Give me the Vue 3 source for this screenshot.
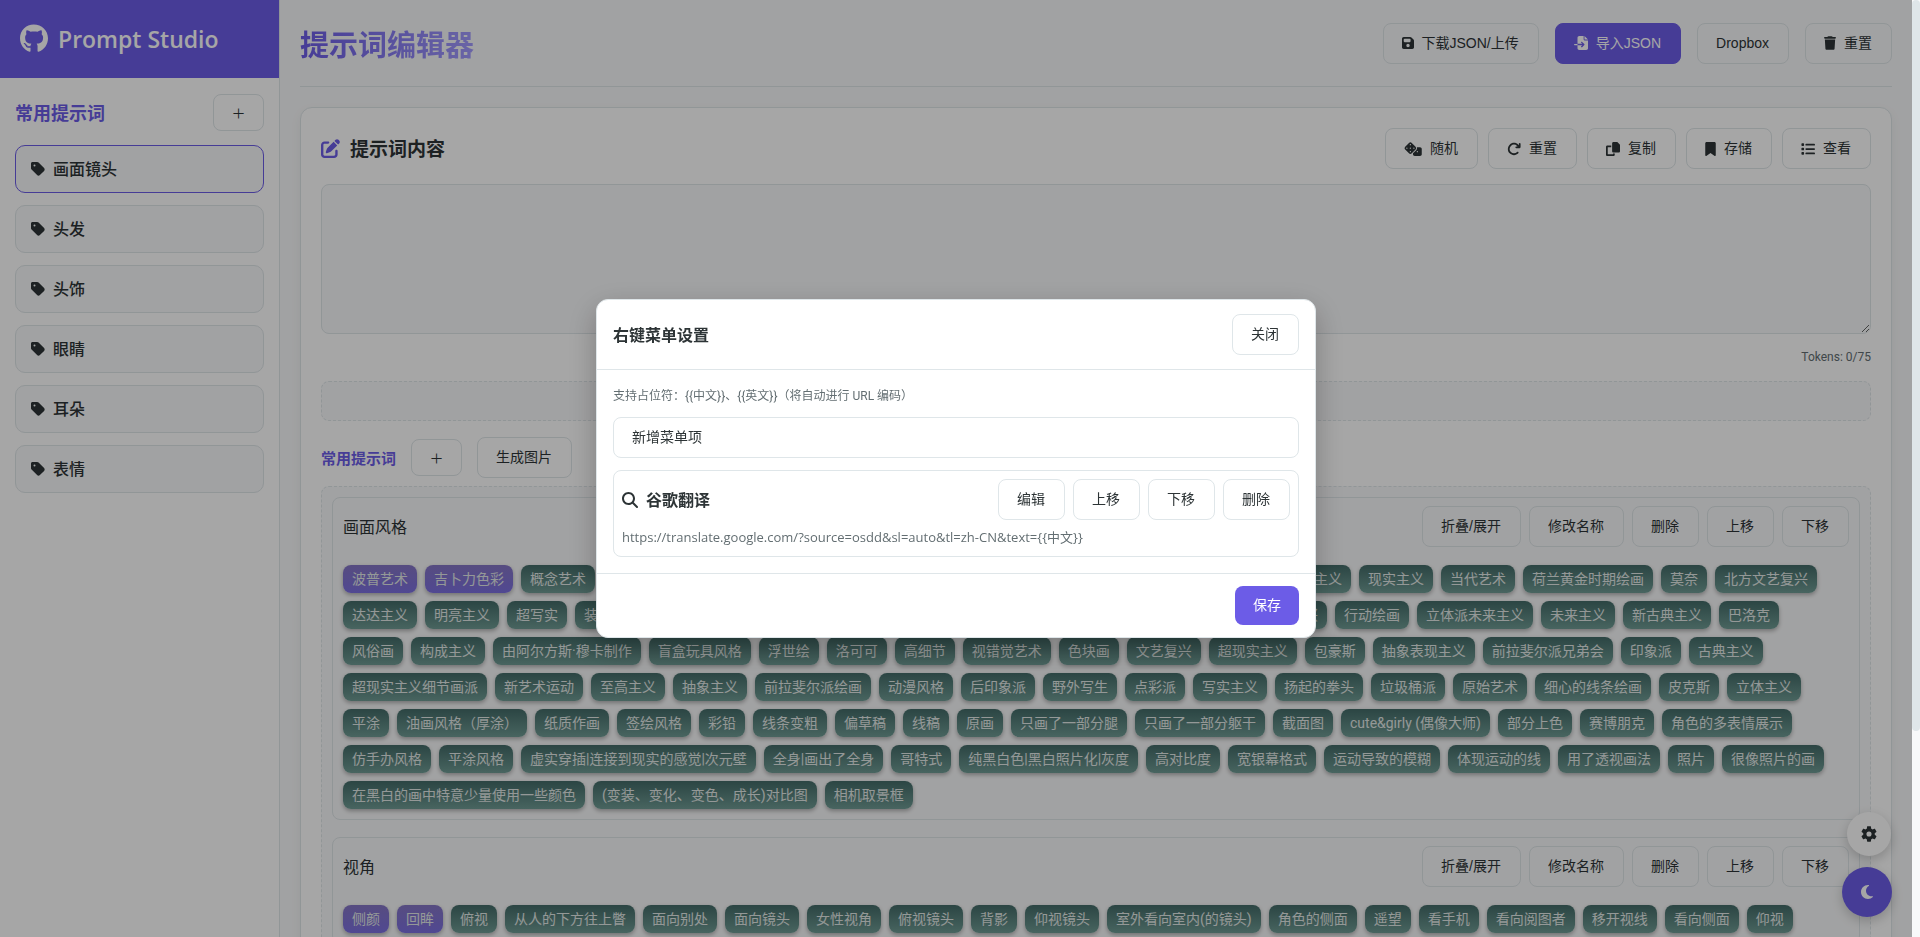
<script setup>
import { ref, h } from 'vue'

const icons = {
  github: ['0 0 496 512', 'M165.9 397.4c0 2-2.3 3.6-5.2 3.6-3.3.3-5.6-1.3-5.6-3.6 0-2 2.3-3.6 5.2-3.6 3-.3 5.6 1.3 5.6 3.6zm-31.1-4.5c-.7 2 1.3 4.3 4.3 4.9 2.6 1 5.6 0 6.2-2s-1.3-4.3-4.3-5.2c-2.6-.7-5.5.3-6.2 2.3zm44.2-1.7c-2.9.7-4.9 2.6-4.6 4.9.3 2 2.9 3.3 5.9 2.6 2.9-.7 4.9-2.6 4.6-4.6-.3-1.9-3-3.2-5.9-2.9zM244.8 8C106.1 8 0 113.3 0 252c0 110.9 69.8 205.8 169.5 239.2 12.8 2.3 17.3-5.6 17.3-12.1 0-6.2-.3-40.4-.3-61.4 0 0-70 15-84.7-29.8 0 0-11.4-29.1-27.8-36.6 0 0-22.9-15.7 1.6-15.4 0 0 24.9 2 38.6 25.8 21.9 38.6 58.6 27.5 72.9 20.9 2.3-16 8.8-27.1 16-33.7-55.9-6.2-112.3-14.3-112.3-110.5 0-27.5 7.6-41.3 23.6-58.9-2.6-6.5-11.1-33.3 2.6-67.9 20.9-6.5 69 27 69 27 20-5.6 41.5-8.5 62.8-8.5s42.8 2.9 62.8 8.5c0 0 48.1-33.6 69-27 13.7 34.7 5.2 61.4 2.6 67.9 16 17.7 25.8 31.5 25.8 58.9 0 96.5-58.9 104.2-114.8 110.5 9.2 7.9 17 22.9 17 46.4 0 33.7-.3 75.4-.3 83.6 0 6.5 4.6 14.4 17.3 12.1C428.2 457.8 496 362.9 496 252 496 113.3 383.5 8 244.8 8z'],
  tag: ['0 0 448 512', 'M0 80V229.5c0 17 6.7 33.3 18.7 45.3l176 176c25 25 65.5 25 90.5 0L418.7 317.3c25-25 25-65.5 0-90.5l-176-176c-12-12-28.3-18.7-45.3-18.7H48C21.5 32 0 53.5 0 80zm112 32a32 32 0 1 1 0 64 32 32 0 1 1 0-64z'],
  save: ['0 0 448 512', 'M64 32C28.7 32 0 60.7 0 96V416c0 35.3 28.7 64 64 64H384c35.3 0 64-28.7 64-64V173.3c0-17-6.7-33.3-18.7-45.3L352 50.7C340 38.7 323.7 32 306.7 32H64zm0 96c0-17.7 14.3-32 32-32H288c17.7 0 32 14.3 32 32v64c0 17.7-14.3 32-32 32H96c-17.7 0-32-14.3-32-32V128zM224 288a64 64 0 1 1 0 128 64 64 0 1 1 0-128z'],
  import: ['0 0 512 512', 'M128 64c0-35.3 28.7-64 64-64H352V128c0 17.7 14.3 32 32 32H512V448c0 35.3-28.7 64-64 64H192c-35.3 0-64-28.7-64-64V336H302.1l-39 39c-9.4 9.4-9.4 24.6 0 33.9s24.6 9.4 33.9 0l80-80c9.4-9.4 9.4-24.6 0-33.9l-80-80c-9.4-9.4-24.6-9.4-33.9 0s-9.4 24.6 0 33.9l39 39H128V64zm0 224v48H24c-13.3 0-24-10.7-24-24s10.7-24 24-24H128zM512 128H384V0L512 128z'],
  trash: ['0 0 448 512', 'M135.2 17.7L128 32H32C14.3 32 0 46.3 0 64S14.3 96 32 96H416c17.7 0 32-14.3 32-32s-14.3-32-32-32H320l-7.2-14.3C307.4 6.8 296.3 0 284.2 0H163.8c-12.1 0-23.2 6.8-28.6 17.7zM416 128H32L53.2 467c1.6 25.3 22.6 45 47.9 45H346.9c25.3 0 46.3-19.7 47.9-45L416 128z'],
  rotate: ['0 0 512 512', 'M386.3 160H336c-17.7 0-32 14.3-32 32s14.3 32 32 32H464c17.7 0 32-14.3 32-32V64c0-17.7-14.3-32-32-32s-32 14.3-32 32v51.2L414.4 97.6c-87.5-87.5-229.3-87.5-316.8 0s-87.5 229.3 0 316.8s229.3 87.5 316.8 0c12.5-12.5 12.5-32.8 0-45.3s-32.8-12.5-45.3 0c-62.5 62.5-163.8 62.5-226.3 0s-62.5-163.8 0-226.3s163.8-62.5 226.3 0L386.3 160z'],
  copy: ['0 0 512 512', 'M272 0H396.1c12.7 0 24.9 5.1 33.9 14.1l67.9 67.9c9 9 14.1 21.2 14.1 33.9V336c0 26.5-21.5 48-48 48H272c-26.5 0-48-21.5-48-48V48c0-26.5 21.5-48 48-48zM48 128H192v64H64V448H256V416h64v48c0 26.5-21.5 48-48 48H48c-26.5 0-48-21.5-48-48V176c0-26.5 21.5-48 48-48z'],
  bookmark: ['0 0 384 512', 'M0 48V487.7C0 501.1 10.9 512 24.3 512c5 0 9.9-1.5 14-4.4L192 400 345.7 507.6c4.1 2.9 9 4.4 14 4.4c13.4 0 24.3-10.9 24.3-24.3V48c0-26.5-21.5-48-48-48H48C21.5 0 0 21.5 0 48z'],
  list: ['0 0 512 512', 'M40 48H88a24 24 0 0 1 24 24V120a24 24 0 0 1-24 24H40a24 24 0 0 1-24-24V72A24 24 0 0 1 40 48zM192 64H480a32 32 0 0 1 0 64H192a32 32 0 0 1 0-64zM192 224H480a32 32 0 0 1 0 64H192a32 32 0 0 1 0-64zM192 384H480a32 32 0 0 1 0 64H192a32 32 0 0 1 0-64zM40 208H88a24 24 0 0 1 24 24V280a24 24 0 0 1-24 24H40a24 24 0 0 1-24-24V232A24 24 0 0 1 40 208zM40 368H88a24 24 0 0 1 24 24V440a24 24 0 0 1-24 24H40a24 24 0 0 1-24-24V392A24 24 0 0 1 40 368z'],
  dice: ['0 0 640 512', 'M274.9 34.3c-28.1-28.1-73.7-28.1-101.8 0L34.3 173.1c-28.1 28.1-28.1 73.7 0 101.8L173.1 413.7c28.1 28.1 73.7 28.1 101.8 0L413.7 274.9c28.1-28.1 28.1-73.7 0-101.8L274.9 34.3zM200 224a24 24 0 1 1 48 0 24 24 0 1 1-48 0zM96 200a24 24 0 1 1 0 48 24 24 0 1 1 0-48zM224 376a24 24 0 1 1 0-48 24 24 0 1 1 0 48zM352 200a24 24 0 1 1 0 48 24 24 0 1 1 0-48zM224 120a24 24 0 1 1 0-48 24 24 0 1 1 0 48zm96 328c0 35.3 28.7 64 64 64H576c35.3 0 64-28.7 64-64V256c0-35.3-28.7-64-64-64H461.7c11.6 36 3.1 77-25.4 105.5L320 413.8V448zM480 328a24 24 0 1 1 0 48 24 24 0 1 1 0-48z'],
  edit: ['0 0 512 512', 'M471.6 21.7c-21.9-21.9-57.3-21.9-79.2 0L362.3 51.7l97.9 97.9 30.1-30.1c21.9-21.9 21.9-57.3 0-79.2L471.6 21.7zm-299.2 220c-6.1 6.1-10.8 13.6-13.5 21.9l-29.6 88.8c-2.9 8.6-.6 18.1 5.8 24.6s15.9 8.7 24.6 5.8l88.8-29.6c8.2-2.7 15.7-7.4 21.9-13.5L437.7 172.3 339.7 74.3 172.4 241.7zM96 64C43 64 0 107 0 160V416c0 53 43 96 96 96H352c53 0 96-43 96-96V320c0-17.7-14.3-32-32-32s-32 14.3-32 32v96c0 17.7-14.3 32-32 32H96c-17.7 0-32-14.3-32-32V160c0-17.7 14.3-32 32-32h96c17.7 0 32-14.3 32-32s-14.3-32-32-32H96z'],
  search: ['0 0 512 512', 'M416 208c0 45.9-14.9 88.3-40 122.7L502.6 457.4c12.5 12.5 12.5 32.8 0 45.3s-32.8 12.5-45.3 0L330.7 376c-34.4 25.2-76.8 40-122.7 40C93.1 416 0 322.9 0 208S93.1 0 208 0S416 93.1 416 208zM208 352a144 144 0 1 0 0-288 144 144 0 1 0 0 288z'],
  gear: ['2 2 20 20', 'M19.14 12.94c.04-.3.06-.61.06-.94 0-.32-.02-.64-.07-.94l2.03-1.58c.18-.14.23-.41.12-.61l-1.92-3.32c-.12-.22-.37-.29-.59-.22l-2.39.96c-.5-.38-1.03-.7-1.62-.94l-.36-2.54c-.04-.24-.24-.41-.48-.41h-3.84c-.24 0-.43.17-.47.41l-.36 2.54c-.59.24-1.13.57-1.62.94l-2.39-.96c-.22-.08-.47 0-.59.22L2.74 8.87c-.12.21-.08.47.12.61l2.03 1.58c-.05.3-.09.63-.09.94s.02.64.07.94l-2.03 1.58c-.18.14-.23.41-.12.61l1.92 3.32c.12.22.37.29.59.22l2.39-.96c.5.38 1.03.7 1.62.94l.36 2.54c.05.24.24.41.48.41h3.84c.24 0 .44-.17.47-.41l.36-2.54c.59-.24 1.13-.56 1.62-.94l2.39.96c.22.08.47 0 .59-.22l1.92-3.32c.12-.22.07-.47-.12-.61l-2.01-1.58zM12 15.2a3.2 3.2 0 1 1 0-6.4 3.2 3.2 0 0 1 0 6.4z'],
  moon: ['0 0 384 512', 'M223.5 32C100 32 0 132.3 0 256S100 480 223.5 480c60.6 0 115.5-24.2 155.8-63.4c5-4.9 6.3-12.5 3.1-18.7s-10.1-9.7-17-8.5c-9.8 1.7-19.8 2.6-30.1 2.6c-96.9 0-175.5-78.8-175.5-176c0-65.8 36-123.1 89.3-153.3c6.1-3.5 9.2-10.5 7.7-17.3s-7.3-11.9-14.3-12.5c-6.3-.5-12.6-.8-19-.8z'],
}

const Icon = (props) =>
  h('svg', { viewBox: icons[props.name][0], fill: 'currentColor', 'aria-hidden': 'true' }, [
    h('path', { d: icons[props.name][1] }),
  ])
Icon.props = ['name']

const categories = ['画面镜头', '头发', '头饰', '眼睛', '耳朵', '表情']
const activeCategory = ref('画面镜头')
const prompt = ref('')

const editorActions = [
  { icon: 'dice', label: '随机' },
  { icon: 'rotate', label: '重置' },
  { icon: 'copy', label: '复制' },
  { icon: 'bookmark', label: '存储' },
  { icon: 'list', label: '查看' },
]
const groupActions = ['折叠/展开', '修改名称', '删除', '上移', '下移']
const itemActions = ['编辑', '上移', '下移', '删除']

const groups = [
  {
    name: '画面风格',
    picked: 2,
    tags: [
      '波普艺术', '吉卜力色彩', '概念艺术', '表现主义绘画', '波斯细密画风格', '装饰艺术运动', '哥特式建筑风格', '浮世绘版画集', '野兽派绘画', '象征主义',
      '现实主义', '当代艺术', '荷兰黄金时期绘画', '莫奈', '北方文艺复兴',
      '达达主义', '明亮主义', '超写实', '装饰艺术', '油画', '水彩', '素描', '版画', '壁画', '剪纸', '漆画', '水墨', '未来派', '巴比松派', '哥特式复兴',
      '行动绘画', '立体派未来主义', '未来主义', '新古典主义', '巴洛克',
      '风俗画', '构成主义', '由阿尔方斯·穆卡制作', '盲盒玩具风格', '浮世绘', '洛可可', '高细节', '视错觉艺术', '色块画', '文艺复兴', '超现实主义', '包豪斯', '抽象表现主义', '前拉斐尔派兄弟会', '印象派', '古典主义',
      '超现实主义细节画派', '新艺术运动', '至高主义', '抽象主义', '前拉斐尔派绘画', '动漫风格', '后印象派', '野外写生', '点彩派', '写实主义', '扬起的拳头', '垃圾桶派', '原始艺术', '细心的线条绘画', '皮克斯', '立体主义',
      '平涂', '油画风格（厚涂）', '纸质作画', '签绘风格', '彩铅', '线条变粗', '偏草稿', '线稿', '原画', '只画了一部分腿', '只画了一部分躯干', '截面图', 'cute&girly (偶像大师)', '部分上色', '赛博朋克', '角色的多表情展示',
      '仿手办风格', '平涂风格', '虚实穿插|连接到现实的感觉|次元壁', '全身|画出了全身', '哥特式', '纯黑白色|黑白照片化|灰度', '高对比度', '宽银幕格式', '运动导致的模糊', '体现运动的线', '用了透视画法', '照片', '很像照片的画',
      '在黑白的画中特意少量使用一些颜色', '(变装、变化、变色、成长)对比图', '相机取景框',
    ],
  },
  {
    name: '视角',
    picked: 2,
    tags: [
      '侧颜', '回眸', '俯视', '从人的下方往上瞥', '面向别处', '面向镜头', '女性视角', '俯视镜头', '背影', '仰视镜头', '室外看向室内(的镜头)', '角色的侧面', '遥望', '看手机', '看向阅图者', '移开视线', '看向侧面', '仰视',
    ],
  },
]

const hint = '支持占位符：{{中文}}、{{英文}}（将自动进行 URL 编码）'
const menuUrl = 'https://translate.google.com/?source=osdd&sl=auto&tl=zh-CN&text={{中文}}'
</script>

<template>
  <div class="page">
    <aside class="sidebar">
      <div class="brand">
        <a href="#" aria-label="GitHub"><Icon name="github" class="brand-icon" /></a>
        <span>Prompt Studio</span>
      </div>
      <div class="side-body">
        <div class="side-head">
          <h2>常用提示词</h2>
          <button type="button" class="btn plus">+</button>
        </div>
        <button
          v-for="c in categories"
          :key="c"
          type="button"
          class="category"
          :class="{ active: c === activeCategory }"
          @click="activeCategory = c"
        >
          <Icon name="tag" class="tag-icon" />{{ c }}
        </button>
      </div>
    </aside>

    <main class="main">
      <header class="top">
        <h1>提示词编辑器</h1>
        <div class="actions wide">
          <button type="button" class="btn"><Icon name="save" class="ic narrow" />下载JSON/上传</button>
          <button type="button" class="btn primary"><Icon name="import" class="ic" />导入JSON</button>
          <button type="button" class="btn">Dropbox</button>
          <button type="button" class="btn"><Icon name="trash" class="ic narrow" />重置</button>
        </div>
      </header>

      <section class="card">
        <div class="card-head">
          <h2><Icon name="edit" class="edit-icon" />提示词内容</h2>
          <div class="actions">
            <button v-for="a in editorActions" :key="a.label" type="button" class="btn">
              <Icon :name="a.icon" class="ic" :class="a.icon" />{{ a.label }}
            </button>
          </div>
        </div>
        <textarea v-model="prompt" aria-label="提示词内容"></textarea>
        <div class="tokens">Tokens: 0/75</div>
        <div class="drop"></div>
        <div class="common">
          <h3>常用提示词</h3>
          <button type="button" class="btn plus">+</button>
          <button type="button" class="btn">生成图片</button>
        </div>
        <div class="groups">
          <section v-for="g in groups" :key="g.name" class="group">
            <div class="group-head">
              <span>{{ g.name }}</span>
              <div class="actions tight">
                <button v-for="a in groupActions" :key="a" type="button" class="btn">{{ a }}</button>
              </div>
            </div>
            <div class="tags">
              <button v-for="(t, i) in g.tags" :key="t" type="button" class="tag" :class="{ picked: i < g.picked }">{{ t }}</button>
            </div>
          </section>
        </div>
      </section>
    </main>

    <div class="floats">
      <button type="button" class="float light" aria-label="设置"><Icon name="gear" class="gear-icon" /></button>
      <button type="button" class="float dark" aria-label="夜间模式"><Icon name="moon" class="moon-icon" /></button>
    </div>
  </div>

  <div class="rail"><div class="thumb"></div></div>

  <div class="overlay">
    <div class="modal" role="dialog" aria-labelledby="menu-title">
      <header class="modal-head">
        <h2 id="menu-title">右键菜单设置</h2>
        <button type="button" class="btn">关闭</button>
      </header>
      <div class="modal-body">
        <p class="hint">{{ hint }}</p>
        <button type="button" class="btn add">新增菜单项</button>
        <div class="item">
          <div class="item-head">
            <h3><Icon name="search" class="search-icon" />谷歌翻译</h3>
            <div class="actions tight">
              <button v-for="a in itemActions" :key="a" type="button" class="btn">{{ a }}</button>
            </div>
          </div>
          <p class="url">{{ menuUrl }}</p>
        </div>
      </div>
      <footer class="modal-foot">
        <button type="button" class="btn primary save">保存</button>
      </footer>
    </div>
  </div>
</template>

<style>
html,
body {
  overflow: hidden;
  background: #f8f9fa;
}
</style>

<style scoped>
.page,
.overlay {
  --purple: #6c5ce7;
  --line: #dfe6e9;
  --ink: #2d3436;
  --muted: #636e72;
  box-sizing: border-box;
  color: var(--ink);
  font-family: "Open Sans", "Noto Sans CJK SC", sans-serif;
  font-size: 16px;
  line-height: 26px;
}
.page *,
.overlay * {
  box-sizing: border-box;
}
.page {
  display: flex;
  height: 100vh;
  margin-right: 8px;
  overflow: hidden;
  background: #f8f9fa;
}
h1,
h2,
h3,
p {
  margin: 0;
}
svg {
  display: block;
  flex: none;
}

.sidebar {
  flex: 0 0 280px;
  background: #fff;
  border-right: 1px solid var(--line);
}
.brand {
  display: flex;
  align-items: center;
  gap: 10px;
  height: 78px;
  padding: 0 20px;
  background: var(--purple);
  color: #fff;
  font-size: 23px;
  font-weight: 600;
  line-height: 38px;
}
.brand a {
  padding-bottom: 2px;
  color: inherit;
}
.brand-icon {
  width: 28px;
  height: 29px;
}
.side-body {
  display: flex;
  flex-direction: column;
  gap: 12px;
  padding: 16px 15px;
}
.side-head {
  display: flex;
  align-items: center;
  justify-content: space-between;
  margin-bottom: 2px;
}
.side-head h2 {
  color: var(--purple);
  font-size: 18px;
}
.category {
  display: flex;
  align-items: center;
  gap: 8px;
  height: 48px;
  padding: 0 15px;
  border: 1px solid var(--line);
  border-radius: 10px;
  background: #f8f9fa;
  color: var(--ink);
  font: inherit;
  font-weight: 500;
}
.category.active {
  border-color: var(--purple);
}
.tag-icon {
  width: 14px;
  height: 16px;
}

.btn {
  display: inline-flex;
  align-items: center;
  gap: 8px;
  padding: 10px 19px 10px 18px;
  border: 1px solid var(--line);
  border-radius: 8px;
  background: transparent;
  color: var(--ink);
  font-family: "Liberation Sans", "Noto Sans CJK SC", sans-serif;
  font-size: 14px;
  line-height: 19px;
  white-space: nowrap;
}
.btn.primary {
  border-color: var(--purple);
  background: var(--purple);
  color: #fff;
}
.btn.plus {
  justify-content: center;
  width: 51px;
  padding: 10px 0;
  font-family: "Open Sans", sans-serif;
  font-size: 22px;
  font-weight: 300;
  line-height: 15px;
}
.ic {
  width: 14px;
  height: 14px;
}
.ic.narrow {
  width: 12px;
}
.ic.dice {
  width: 18px;
}
.ic.bookmark {
  width: 11px;
}
.actions {
  display: flex;
  gap: 10px;
}
.actions.wide {
  gap: 16px;
}
.actions.tight {
  gap: 8px;
}

.main {
  flex: 1;
  min-width: 0;
  padding: 0 20px;
}
.top {
  display: flex;
  align-items: center;
  justify-content: space-between;
  height: 87px;
  border-bottom: 1px solid var(--line);
}
.top h1 {
  padding-top: 3px;
  background: linear-gradient(to right, #6c5ce7, #a29bfe);
  background-clip: text;
  -webkit-background-clip: text;
  color: transparent;
  font-size: 29px;
  line-height: 46px;
}
.card {
  margin-top: 20px;
  padding: 20px;
  border: 1px solid var(--line);
  border-radius: 12px;
  background: #fff;
  box-shadow: 0 4px 12px rgba(0, 0, 0, 0.05);
}
.card-head {
  display: flex;
  align-items: center;
  justify-content: space-between;
  margin-bottom: 15px;
}
.card-head h2 {
  display: flex;
  align-items: center;
  gap: 10px;
  font-size: 19px;
}
.edit-icon {
  width: 19px;
  height: 19px;
  color: var(--purple);
}
textarea {
  display: block;
  width: 100%;
  height: 150px;
  padding: 15px;
  border: 1px solid var(--line);
  border-radius: 8px;
  background: #f8f9fa;
  color: inherit;
  font: inherit;
  resize: vertical;
}
.tokens {
  margin: 13px 0 14px;
  color: var(--muted);
  font-family: Roboto, sans-serif;
  font-size: 12px;
  line-height: 20px;
  text-align: right;
}
.drop {
  height: 40px;
  border: 1px dashed var(--line);
  border-radius: 8px;
  background: #f8f9fa;
}
.common {
  display: flex;
  align-items: center;
  gap: 15px;
  margin: 16px 0 8px;
}
.common h3 {
  color: var(--purple);
  font-size: 15px;
}
.groups {
  display: flex;
  flex-direction: column;
  gap: 17px;
  padding: 10px;
  border: 1px dashed var(--line);
  border-radius: 8px;
  background: #f8f9fa;
}
.group {
  padding: 8px 10px 10px;
  border: 1px solid var(--line);
  border-radius: 8px;
}
.group-head {
  display: flex;
  align-items: center;
  justify-content: space-between;
  margin-bottom: 18px;
}
.tags {
  display: flex;
  flex-wrap: wrap;
  gap: 8px;
  padding-right: 10px;
}
.tag {
  padding: 4px 9px;
  border: 0;
  border-radius: 8px;
  background: linear-gradient(to bottom, #436b68, #6f9b94);
  box-shadow: 0 2px 4px rgba(0, 0, 0, 0.3);
  color: #e4eae8;
  font-family: Roboto, "Noto Sans CJK SC", sans-serif;
  font-size: 14px;
  line-height: 20px;
  white-space: nowrap;
}
.tag.picked {
  background: linear-gradient(to bottom, #8576c5, #7c6fe0);
}

.floats {
  position: fixed;
  right: 28px;
  bottom: 20px;
  display: flex;
  flex-direction: column;
  align-items: center;
  gap: 11px;
}
.float {
  display: flex;
  align-items: center;
  justify-content: center;
  padding: 0;
  border: 0;
  border-radius: 50%;
  box-shadow: 0 4px 12px rgba(0, 0, 0, 0.2);
}
.float.light {
  width: 44px;
  height: 44px;
  margin-left: 4px;
  background: #fff;
  color: var(--ink);
}
.float.dark {
  width: 50px;
  height: 50px;
  background: var(--purple);
  color: #fff;
}
.gear-icon {
  width: 16px;
  height: 16px;
}
.moon-icon {
  width: 14px;
  height: 16px;
}

.rail {
  position: fixed;
  z-index: 3;
  top: 0;
  right: 0;
  bottom: 0;
  width: 8px;
  background: #f8f9fa;
}
.thumb {
  height: 78%;
  border-radius: 4px;
  background: #dfe6e9;
}

.overlay {
  position: fixed;
  inset: 0 8px 0 0;
  z-index: 2;
  display: flex;
  align-items: center;
  justify-content: center;
  background: rgba(0, 0, 0, 0.35);
}
.modal {
  width: 720px;
  max-width: 90vw;
  border: 1px solid var(--line);
  border-radius: 12px;
  background: #fff;
  box-shadow: 0 10px 30px rgba(0, 0, 0, 0.25);
}
.modal-head {
  display: flex;
  align-items: center;
  justify-content: space-between;
  padding: 14px 16px;
  border-bottom: 1px solid var(--line);
}
.modal-head h2,
.item h3 {
  font-size: 16px;
}
.modal-body {
  display: flex;
  flex-direction: column;
  padding: 16px;
}
.hint {
  margin-bottom: 11px;
  color: var(--muted);
  font-family: Roboto, "Noto Sans CJK SC", sans-serif;
  font-size: 12px;
  line-height: 20px;
}
.add {
  margin-bottom: 12px;
}
.item {
  padding: 8px;
  border: 1px solid var(--line);
  border-radius: 8px;
}
.item-head {
  display: flex;
  align-items: center;
  justify-content: space-between;
  margin-bottom: 7px;
}
.item h3 {
  display: flex;
  align-items: center;
  gap: 8px;
}
.search-icon {
  width: 16px;
  height: 16px;
}
.url {
  color: var(--muted);
  font-size: 13px;
  line-height: 21px;
}
.modal-foot {
  display: flex;
  justify-content: flex-end;
  padding: 12px 16px;
  border-top: 1px solid var(--line);
}
.save {
  padding: 10px 18px;
  border: 0;
}
</style>
